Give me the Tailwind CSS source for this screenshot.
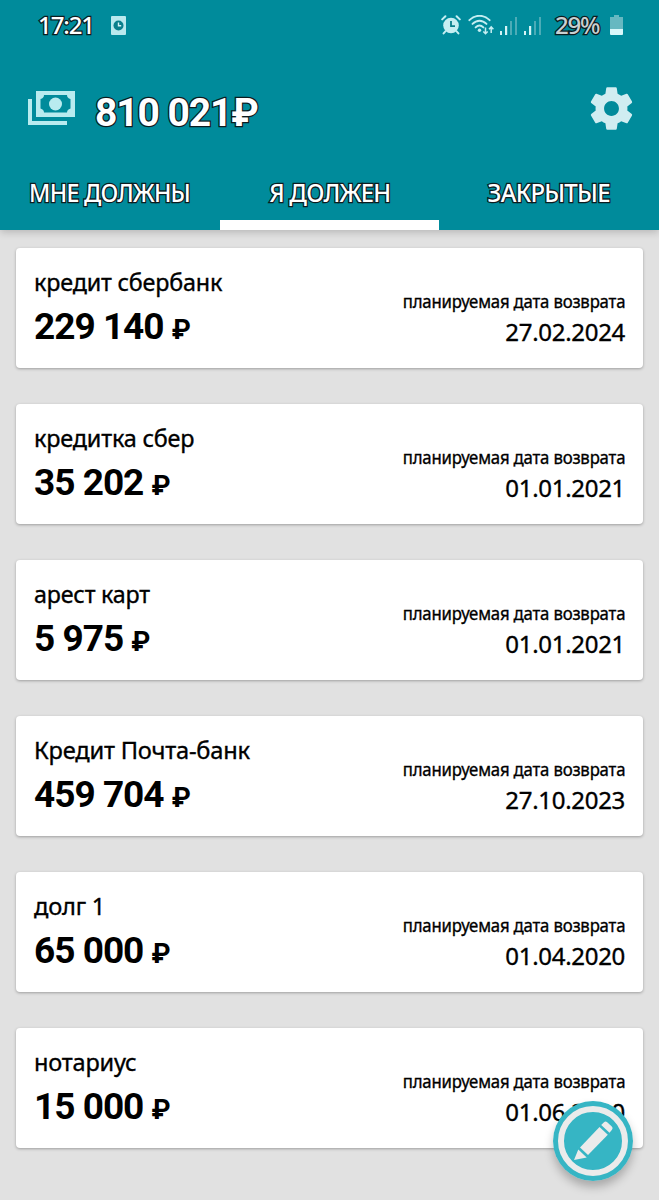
<!DOCTYPE html>
<html lang="ru">
  <head>
    <meta charset="UTF-8" />
    <meta name="viewport" content="width=device-width, initial-scale=1.0" />
    <title>Долги</title>
    <script src="https://cdn.jsdelivr.net/npm/@tailwindcss/browser@4"></script>
    <style>
      body {
        font-family: "Noto Sans", sans-serif;
        overflow: hidden;
      }
      .outlined {
        -webkit-text-stroke: 2.6px #0c1c1f;
        paint-order: stroke fill;
      }
      .firm {
        -webkit-text-stroke: 0.35px #000;
      }
    </style>
  </head>
  <body class="bg-[#e1e1e1] h-[1200px] text-black">
    <header class="relative h-[230px] bg-[#008b9b] flex flex-col shadow-[0_2px_8px_rgba(0,0,0,0.2)]">
      <!-- status bar -->
      <div class="h-[50px] pl-[38px] pr-[36px] flex items-center text-[24px] leading-[50px]">
        <span class="outlined font-medium text-white w-[58px] tracking-[-1.1px] whitespace-nowrap">17:21</span>
        <svg class="w-[15px] h-[19px] ml-[15px]" viewBox="0 0 15 19">
          <rect width="15" height="19" rx="1" fill="#b9e9ee" />
          <circle cx="7.5" cy="9.5" r="5" fill="#087f8c" />
          <path d="M7.5 6.5v3.2h2.7" fill="none" stroke="#d5f3f5" stroke-width="1.4" />
        </svg>
        <div class="flex-grow"></div>
        <svg class="w-[20px] h-[20px]" viewBox="0 0 20 20">
          <g fill="none" stroke="#c5eef2" stroke-width="2" stroke-linecap="round">
            <path d="M1.2 4.4 4.4 1.2M18.8 4.4 15.6 1.2M4.6 16.2 2.6 18.4M15.4 16.2 17.4 18.4" />
          </g>
          <circle cx="10" cy="10.5" r="7.8" fill="#c5eef2" />
          <path d="M10 6v5.2h4" fill="none" stroke="#087f8c" stroke-width="1.8" />
        </svg>
        <svg class="w-[26px] h-[20px] ml-[7px]" viewBox="0 0 26 20">
          <g fill="none" stroke="#c5eef2" stroke-width="1.9" stroke-linecap="round">
            <path d="M1.4 5.2C7.2-.7 15.8-.7 21.600 5.2" />
            <path d="M4.5 8.9C8.7 4.600 14.300 4.600 18.500 8.9" />
            <path d="M7.6 12.4c2.6-2.6 5.2-2.6 7.8 0" />
          </g>
          <circle cx="11.5" cy="15.2" r="1.7" fill="#c5eef2" />
          <path d="M17.500 12.500v6M15.300 16.400l2.200 2.300 2.200-2.300M23.200 18v-6M21 14.200l2.200-2.300 2.200 2.300" fill="none" stroke="#c5eef2" stroke-width="1.5" />
        </svg>
        <svg class="w-[17px] h-[19px] ml-[6px]" viewBox="0 0 17 19">
          <path d="M0 15h2v4H0zM5 10h2.200v9H5z" fill="#d5f4f6" />
          <path d="M10 5h2v14h-2zM15 1h2v18h-2z" fill="#4cacb7" />
        </svg>
        <svg class="w-[17px] h-[19px] ml-[7px]" viewBox="0 0 17 19">
          <path d="M0 15h2v4H0zM5 10h2.200v9H5z" fill="#d5f4f6" />
          <path d="M10 5h2v14h-2zM15 1h2v18h-2z" fill="#4cacb7" />
        </svg>
        <span class="outlined font-medium text-[#c9d0d1] w-[48px] ml-[14px] tracking-[-1.2px] whitespace-nowrap">29%</span>
        <svg class="w-[13px] h-[20px] ml-[7px]" viewBox="0 0 13 20">
          <path d="M4 0h5v2h4v12H0V2h4z" fill="#66b8c1" />
          <path d="M0 14h13v5q0 1-1 1H1q-1 0-1-1z" fill="#d8f7fa" />
        </svg>
      </div>

      <!-- total -->
      <div class="h-[115px] pl-[28px] pr-[26px] flex items-center">
        <svg class="mt-[1px] w-[47px] h-[35px]" viewBox="0 0 47 35">
          <path d="M0 8h4v22h35v4H0z" fill="#b9ebef" />
          <path d="M8 0h39v26H8z" fill="#b9ebef" />
          <path d="M16 4h23q0 3 3.500 4v9.500Q39 18.500 39 21.500H16q0-3-3.500-4V8Q16 7 16 4z" fill="#008b9b" />
          <circle cx="27.500" cy="13" r="6.500" fill="#b9ebef" />
        </svg>
        <div class="outlined mt-[11px] ml-[20px] font-[Roboto] font-bold text-[39px] tracking-[-1.1px] text-white whitespace-nowrap">810 021₽</div>
        <div class="flex-grow"></div>
        <svg class="mt-[1px] w-[51px] h-[51px] -mr-[4px]" viewBox="0 0 24 24" fill="#d0edf1">
          <path d="M19.430 12.980c.04-.32.07-.64.07-.98s-.03-.66-.07-.98l2.110-1.650c.19-.15.24-.42.12-.64l-2-3.460c-.12-.22-.39-.3-.61-.22l-2.490 1c-.52-.4-1.080-.73-1.690-.98l-.38-2.650C14.460 2.180 14.250 2 14 2h-4c-.25 0-.46.18-.49.42l-.38 2.650c-.61.25-1.170.59-1.690.98l-2.490-1c-.23-.09-.49 0-.61.22l-2 3.460c-.13.22-.07.49.12.64l2.110 1.650c-.04.32-.07.65-.07.98s.03.66.07.98l-2.110 1.650c-.19.15-.24.42-.12.64l2 3.460c.12.22.39.3.61.22l2.490-1c.52.4 1.080.73 1.690.98l.38 2.650c.03.24.24.42.49.42h4c.25 0 .46-.18.49-.42l.38-2.650c.61-.25 1.170-.59 1.690-.98l2.490 1c.23.09.49 0 .61-.22l2-3.460c.12-.22.07-.49-.12-.64l-2.110-1.650zM12 15.500c-1.930 0-3.500-1.570-3.500-3.500s1.570-3.500 3.500-3.500 3.500 1.570 3.500 3.500-1.570 3.500-3.500 3.500z" />
        </svg>
      </div>

      <!-- tabs -->
      <nav class="h-[65px] grid grid-cols-3 text-center text-[25px] leading-[55px] text-white whitespace-nowrap">
        <div><span class="outlined font-medium inline-block scale-x-[0.93] tracking-[-0.8px]">МНЕ ДОЛЖНЫ</span></div>
        <div class="border-b-[10px] border-white"><span class="outlined font-medium inline-block scale-x-[0.95] tracking-[-0.8px]">Я ДОЛЖЕН</span></div>
        <div><span class="outlined font-medium inline-block scale-x-[0.96] tracking-[-0.8px]">ЗАКРЫТЫЕ</span></div>
      </nav>
    </header>

    <main class="pt-[18px] px-[16px] flex flex-col gap-[36px] whitespace-nowrap">
      <div class="h-[120px] bg-white rounded-[4px] shadow-[0_1px_3px_rgba(0,0,0,0.3)] px-[18px] flex justify-between">
        <div class="pt-[16px]">
          <div class="firm origin-left scale-x-[0.973] text-[24px] leading-[36px] tracking-[-0.2px]">кредит сбербанк</div>
          <div class="pt-[2px] font-[Roboto] font-bold text-[37px] leading-[50px] tracking-[-1px]">229 140 <span class="text-[27px]">₽</span></div>
        </div>
        <div class="pt-[40px] text-right">
          <div class="firm origin-right scale-x-[0.93] text-[18px] leading-[26px] tracking-[-0.2px]">планируемая дата возврата</div>
          <div class="firm text-[24px] leading-[36px] tracking-[-0.3px]">27.02.2024</div>
        </div>
      </div>

      <div class="h-[120px] bg-white rounded-[4px] shadow-[0_1px_3px_rgba(0,0,0,0.3)] px-[18px] flex justify-between">
        <div class="pt-[16px]">
          <div class="firm origin-left scale-x-[0.977] text-[24px] leading-[36px] tracking-[-0.2px]">кредитка сбер</div>
          <div class="pt-[2px] font-[Roboto] font-bold text-[37px] leading-[50px] tracking-[-1px]">35 202 <span class="text-[27px]">₽</span></div>
        </div>
        <div class="pt-[40px] text-right">
          <div class="firm origin-right scale-x-[0.93] text-[18px] leading-[26px] tracking-[-0.2px]">планируемая дата возврата</div>
          <div class="firm text-[24px] leading-[36px] tracking-[-0.3px]">01.01.2021</div>
        </div>
      </div>

      <div class="h-[120px] bg-white rounded-[4px] shadow-[0_1px_3px_rgba(0,0,0,0.3)] px-[18px] flex justify-between">
        <div class="pt-[16px]">
          <div class="firm origin-left scale-x-[0.97] text-[24px] leading-[36px] tracking-[-0.2px]">арест карт</div>
          <div class="pt-[2px] font-[Roboto] font-bold text-[37px] leading-[50px] tracking-[-1px]">5 975 <span class="text-[27px]">₽</span></div>
        </div>
        <div class="pt-[40px] text-right">
          <div class="firm origin-right scale-x-[0.93] text-[18px] leading-[26px] tracking-[-0.2px]">планируемая дата возврата</div>
          <div class="firm text-[24px] leading-[36px] tracking-[-0.3px]">01.01.2021</div>
        </div>
      </div>

      <div class="h-[120px] bg-white rounded-[4px] shadow-[0_1px_3px_rgba(0,0,0,0.3)] px-[18px] flex justify-between">
        <div class="pt-[16px]">
          <div class="firm origin-left scale-x-[0.985] text-[24px] leading-[36px] tracking-[-0.2px]">Кредит Почта-банк</div>
          <div class="pt-[2px] font-[Roboto] font-bold text-[37px] leading-[50px] tracking-[-1px]">459 704 <span class="text-[27px]">₽</span></div>
        </div>
        <div class="pt-[40px] text-right">
          <div class="firm origin-right scale-x-[0.93] text-[18px] leading-[26px] tracking-[-0.2px]">планируемая дата возврата</div>
          <div class="firm text-[24px] leading-[36px] tracking-[-0.3px]">27.10.2023</div>
        </div>
      </div>

      <div class="h-[120px] bg-white rounded-[4px] shadow-[0_1px_3px_rgba(0,0,0,0.3)] px-[18px] flex justify-between">
        <div class="pt-[16px]">
          <div class="firm origin-left scale-x-[0.985] text-[24px] leading-[36px] tracking-[-0.2px]">долг 1</div>
          <div class="pt-[2px] font-[Roboto] font-bold text-[37px] leading-[50px] tracking-[-1px]">65 000 <span class="text-[27px]">₽</span></div>
        </div>
        <div class="pt-[40px] text-right">
          <div class="firm origin-right scale-x-[0.93] text-[18px] leading-[26px] tracking-[-0.2px]">планируемая дата возврата</div>
          <div class="firm text-[24px] leading-[36px] tracking-[-0.3px]">01.04.2020</div>
        </div>
      </div>

      <div class="h-[120px] bg-white rounded-[4px] shadow-[0_1px_3px_rgba(0,0,0,0.3)] px-[18px] flex justify-between">
        <div class="pt-[16px]">
          <div class="firm origin-left scale-x-[0.98] text-[24px] leading-[36px] tracking-[-0.2px]">нотариус</div>
          <div class="pt-[2px] font-[Roboto] font-bold text-[37px] leading-[50px] tracking-[-1px]">15 000 <span class="text-[27px]">₽</span></div>
        </div>
        <div class="pt-[40px] text-right">
          <div class="firm origin-right scale-x-[0.93] text-[18px] leading-[26px] tracking-[-0.2px]">планируемая дата возврата</div>
          <div class="firm text-[24px] leading-[36px] tracking-[-0.3px]">01.06.2020</div>
        </div>
      </div>
    </main>

    <!-- edit button -->
    <button class="fixed right-[26px] bottom-[19px] w-[80px] h-[80px] rounded-full shadow-[0_6px_10px_rgba(0,0,0,0.25)]">
      <svg class="w-[80px] h-[80px]" viewBox="0 0 80 80">
        <circle cx="40" cy="40" r="40" fill="#36b5c4" />
        <circle cx="40" cy="40" r="32" fill="none" stroke="#ebebeb" stroke-width="6" />
        <g fill="#ebebeb">
          <path d="M27 46.500 46.500 26l8.300 7.700L35 54z" />
          <path d="m25.300 48.500 8.400 8L21 59z" />
          <path d="m48.200 24 2.800-2.800q1.500-1.400 3.200 0l4.600 4.400q1.600 1.500.2 3.200L56.500 31.800z" />
        </g>
      </svg>
    </button>
  </body>
</html>
